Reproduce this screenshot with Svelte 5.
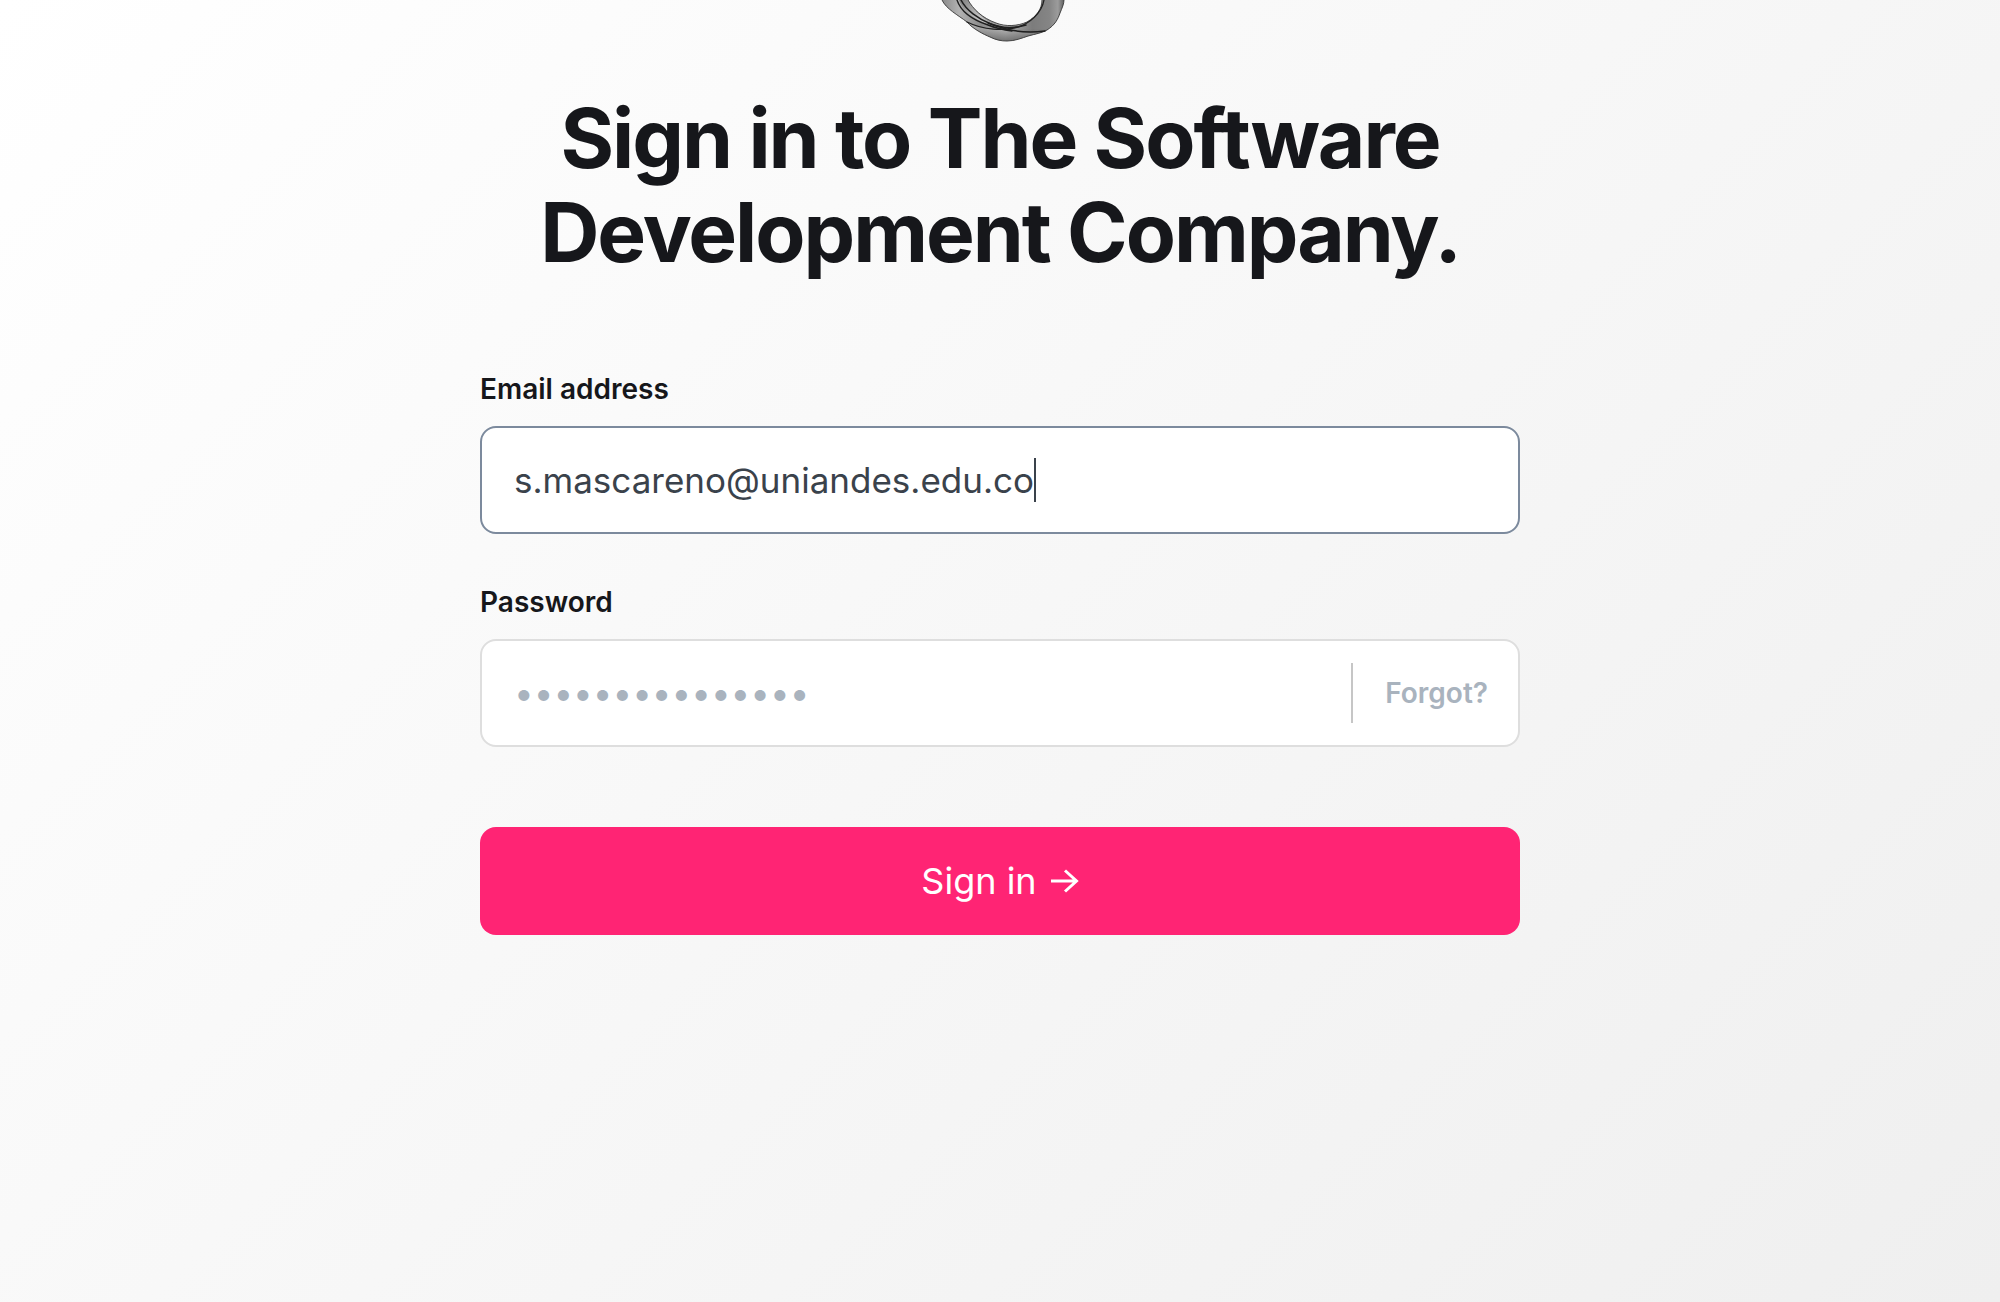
<script>
  let email = $state('s.mascareno@uniandes.edu.co');
  let password = $state('');
  const hint = '•'.repeat(15);

  function submit(event) {
    event.preventDefault();
  }
</script>

<main class="page">
  <header class="brand">
    <svg class="logo" viewBox="0 0 140 44" aria-hidden="true">
      <defs>
        <linearGradient id="ring" x1="0" y1="0" x2="1" y2="0">
          <stop offset="0" stop-color="#8a8a8a" />
          <stop offset="0.14" stop-color="#b2b2b2" />
          <stop offset="0.32" stop-color="#8c8c8c" />
          <stop offset="0.52" stop-color="#aeaeae" />
          <stop offset="0.74" stop-color="#7c7c7c" />
          <stop offset="0.88" stop-color="#858585" />
          <stop offset="0.95" stop-color="#9c9c9c" />
          <stop offset="1" stop-color="#606060" />
        </linearGradient>
        <linearGradient id="fold" x1="0" y1="0" x2="1" y2="0.4">
          <stop offset="0" stop-color="#808080" />
          <stop offset="0.5" stop-color="#c4c4c4" />
          <stop offset="1" stop-color="#a0a0a0" />
        </linearGradient>
        <linearGradient id="shade" x1="0" y1="0" x2="0" y2="1">
          <stop offset="0.7" stop-color="#333" stop-opacity="0" />
          <stop offset="1" stop-color="#333" stop-opacity="0.5" />
        </linearGradient>
      </defs>
      <path d="M12 0C16 9 28 15 37 22C43 29 53 34 60 37C66 40 71 41 77 41C85 41 92 38 98 36C105 34 112 33 117 30C125 25 128 19 130 13C132 8 134 4 134 0H112C112 9 107 16 97 22C88 26 76 27 66 23C53 18 43 9 38 0Z" fill="url(#ring)" />
      <path d="M29 0C33 12 44 19 60 25C74 28 84 28 94 24C84 29 68 28 58 21C49 15 42 8 38 0Z" fill="url(#fold)" />
      <path d="M37 22C49 29 60 30 75 30C88 33 102 34 115 31C105 34 95 38 86 40C70 42 55 37 37 22Z" fill="#bcbcbc" opacity="0.45" />
      <path d="M12 0C16 9 28 15 37 22C43 29 53 34 60 37C66 40 71 41 77 41C85 41 92 38 98 36C105 34 112 33 117 30C125 25 128 19 130 13C132 8 134 4 134 0H112C112 9 107 16 97 22C88 26 76 27 66 23C53 18 43 9 38 0Z" fill="url(#shade)" />
      <g fill="none" stroke="#1f1f1f" stroke-linecap="round">
        <path d="M12 0C16 9 28 15 37 22C43 29 53 34 60 37C66 40 71 41 77 41C85 41 92 38 98 36C105 34 112 33 117 30C125 25 128 19 130 13C132 8 134 4 134 0" stroke="#444" stroke-width="1" />
        <path d="M27 0C31 12 43 20 58 25C68 29 75 30 82 31" stroke-width="1.4" />
        <path d="M31 0C36 10 48 19 61 24C74 29 90 34 115 31" stroke-width="1.5" />
        <path d="M38 0C43 9 52 18 66 23C76 27 88 26 97 22C107 16 112 9 112 0" stroke="#484848" stroke-width="1" />
        <path d="M114 0C112 12 100 25 84 28C74 30 55 31 37 22" stroke-width="1.3" />
        <path d="M58 23C70 28 83 29 96 25" stroke-width="1.5" />
      </g>
    </svg>
  </header>

  <section class="content">
    <h1>Sign in to The Software Development Company.</h1>

    <form onsubmit={submit}>
      <div class="group">
        <label for="email">Email address</label>
        <div class="field active">
          <input id="email" class="email" type="text" inputmode="email" autocomplete="off" spellcheck="false" bind:value={email} />
          <span class="caret"></span>
        </div>
      </div>

      <div class="group">
        <label for="password">Password</label>
        <div class="field">
          <input id="password" class="password" type="password" placeholder={hint} bind:value={password} />
          <a class="forgot" href="#forgot">Forgot?</a>
        </div>
      </div>

      <button type="submit">
        <span>Sign in</span>
        <svg class="arrow" viewBox="0 0 28 24" aria-hidden="true">
          <path d="M0 12H26M14 1.5L25.5 12L14 22.5" />
        </svg>
      </button>
    </form>
  </section>
</main>

<style>
  :global(body) {
    margin: 0;
  }

  .page {
    box-sizing: border-box;
    min-height: 100vh;
    background: linear-gradient(135deg, #fff 0%, #efefef 100%);
    color: #16171b;
    font-family: Inter, 'Liberation Sans', sans-serif;
  }

  .brand {
    display: flex;
    justify-content: center;
  }

  .logo {
    width: 140px;
    height: 44px;
  }

  .content {
    box-sizing: border-box;
    width: 100%;
    max-width: 1040px;
    margin: 0 auto;
    padding: 48px 0 80px;
  }

  h1 {
    margin: 0 0 92px;
    font-size: 82px;
    font-weight: 700;
    line-height: 94px;
    letter-spacing: -0.025em;
    text-align: center;
  }

  .group {
    display: flex;
    flex-direction: column;
    gap: 20px;
    margin-bottom: 51px;
  }

  label {
    align-self: flex-start;
    font-size: 28px;
    font-weight: 600;
    line-height: 34px;
  }

  .field {
    box-sizing: border-box;
    display: flex;
    align-items: center;
    height: 108px;
    padding: 0 30px 0 32px;
    border: 2px solid #dedede;
    border-radius: 16px;
    background: #fff;
  }

  .active {
    border-color: #7c8a9d;
  }

  input {
    min-width: 0;
    padding: 0;
    border: 0;
    outline: 0;
    background: transparent;
    color: #3a424b;
    font: 400 35px/44px Inter, 'Liberation Sans', sans-serif;
  }

  input::placeholder {
    color: #a9b3be;
    opacity: 1;
  }

  .email {
    field-sizing: content;
    caret-color: transparent;
  }

  .caret {
    width: 2px;
    height: 44px;
    background: #3a424b;
  }

  .password {
    flex: 1;
  }

  .forgot {
    padding-left: 32px;
    border-left: 2px solid #c6c6c6;
    color: #a9b3be;
    font-size: 28px;
    font-weight: 600;
    line-height: 60px;
    text-decoration: none;
  }

  button {
    display: flex;
    align-items: center;
    justify-content: center;
    gap: 14px;
    width: 100%;
    height: 108px;
    margin-top: 80px;
    padding: 0;
    border: 0;
    border-radius: 16px;
    background: #ff2474;
    color: #fff;
    font: 400 36px/44px Inter, 'Liberation Sans', sans-serif;
    cursor: pointer;
  }

  .arrow {
    width: 28px;
    height: 24px;
    fill: none;
    stroke: #fff;
    stroke-width: 3;
  }
</style>
